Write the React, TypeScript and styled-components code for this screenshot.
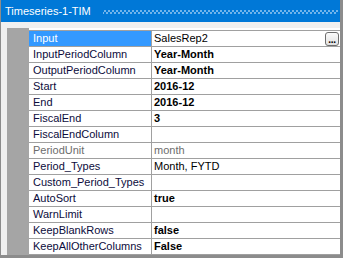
import React from 'react';
import styled, { createGlobalStyle } from 'styled-components';

const GlobalStyle = createGlobalStyle`
  html, body {
    margin: 0;
    padding: 0;
    background: #ffffff;
  }
`;

const Frame = styled.div`
  width: 343px;
  height: 258px;
  box-sizing: border-box;
  border-left: 1px solid #8c8c8c;
  border-right: 3px solid #8c8c8c;
  border-bottom: 3px solid #8c8c8c;
  background: #f0f0f0;
  display: flex;
  flex-direction: column;
  font-family: 'Liberation Sans', Arial, sans-serif;
  overflow: hidden;
`;

const TitleBar = styled.div`
  height: 22px;
  flex: none;
  background: #0078d7;
  display: flex;
  align-items: center;
  padding-left: 4px;
  gap: 12px;
`;

const TitleText = styled.span`
  color: #ffffff;
  font-size: 11px;
  white-space: nowrap;
`;

const Dots = styled.div`
  flex: 1;
  height: 4px;
  margin-right: 2px;
  margin-top: 2px;
  background-image:
    radial-gradient(circle, #74b6ec 0.7px, transparent 1px),
    radial-gradient(circle, #74b6ec 0.7px, transparent 1px);
  background-size: 4px 4px, 4px 4px;
  background-position: 0 -1px, 2px 1px;
`;

const Panel = styled.div`
  flex: 1;
  padding: 6px 0 1px 6px;
  display: flex;
`;

const Grid = styled.div`
  flex: 1;
  display: flex;
  background: #a5a5a5;
`;

const Gutter = styled.div`
  width: 22px;
  flex: none;
`;

const Rows = styled.div`
  flex: 1;
  padding-top: 2px;
  background: #ffffff;
  display: flex;
  flex-direction: column;
`;

const Row = styled.div`
  display: grid;
  grid-template-columns: 123px 1fr;
  height: 16px;
  box-sizing: border-box;
  border-top: 1px solid #a0a0a0;
  &:last-child {
    height: 17px;
    border-bottom: 1px solid #a0a0a0;
  }
`;

const NameCell = styled.div<{ $selected?: boolean; $disabled?: boolean }>`
  display: flex;
  align-items: center;
  padding-left: 4px;
  font-size: 11px;
  line-height: 15px;
  white-space: nowrap;
  border-right: 1px solid #a0a0a0;
  background: ${({ $selected }) => ($selected ? '#3399ff' : '#ffffff')};
  color: ${({ $selected, $disabled }) =>
    $selected ? '#ffffff' : $disabled ? '#6d6d6d' : '#0c0c3c'};
`;

const ValueCell = styled.div<{ $bold?: boolean; $disabled?: boolean }>`
  display: flex;
  align-items: center;
  justify-content: space-between;
  padding-left: 2px;
  padding-right: 1px;
  font-size: 11px;
  line-height: 15px;
  white-space: nowrap;
  font-weight: ${({ $bold }) => ($bold ? 700 : 400)};
  color: ${({ $disabled }) => ($disabled ? '#6d6d6d' : '#000000')};
`;

const EllipsisButton = styled.button`
  width: 14px;
  height: 14px;
  padding: 0 0 1px 0;
  margin: 0;
  box-sizing: border-box;
  border: 1px solid #6e6e6e;
  border-radius: 3px;
  background: linear-gradient(#fbfbfb, #e1e1e1);
  font-family: 'Liberation Sans', Arial, sans-serif;
  font-size: 10px;
  font-weight: 700;
  line-height: 8px;
  color: #000;
  display: flex;
  align-items: flex-end;
  justify-content: center;
  letter-spacing: -0.3px;
`;

interface Prop {
  name: string;
  value: string;
  bold?: boolean;
  disabled?: boolean;
  selected?: boolean;
  button?: boolean;
}

const props: Prop[] = [
  { name: 'Input', value: 'SalesRep2', selected: true, button: true },
  { name: 'InputPeriodColumn', value: 'Year-Month', bold: true },
  { name: 'OutputPeriodColumn', value: 'Year-Month', bold: true },
  { name: 'Start', value: '2016-12', bold: true },
  { name: 'End', value: '2016-12', bold: true },
  { name: 'FiscalEnd', value: '3', bold: true },
  { name: 'FiscalEndColumn', value: '' },
  { name: 'PeriodUnit', value: 'month', disabled: true },
  { name: 'Period_Types', value: 'Month, FYTD' },
  { name: 'Custom_Period_Types', value: '' },
  { name: 'AutoSort', value: 'true', bold: true },
  { name: 'WarnLimit', value: '' },
  { name: 'KeepBlankRows', value: 'false', bold: true },
  { name: 'KeepAllOtherColumns', value: 'False', bold: true },
];

const App: React.FC = () => {
  return (
    <>
      <GlobalStyle />
      <Frame>
        <TitleBar>
          <TitleText>Timeseries-1-TIM</TitleText>
          <Dots />
        </TitleBar>
        <Panel>
          <Grid>
            <Gutter />
            <Rows>
              {props.map((p) => (
                <Row key={p.name}>
                  <NameCell $selected={p.selected} $disabled={p.disabled}>
                    {p.name}
                  </NameCell>
                  <ValueCell $bold={p.bold} $disabled={p.disabled}>
                    <span>{p.value}</span>
                    {p.button && <EllipsisButton>...</EllipsisButton>}
                  </ValueCell>
                </Row>
              ))}
            </Rows>
          </Grid>
        </Panel>
      </Frame>
    </>
  );
};

export default App;
